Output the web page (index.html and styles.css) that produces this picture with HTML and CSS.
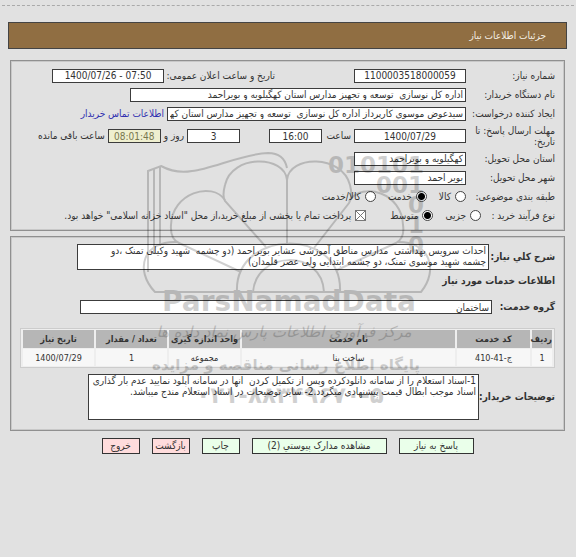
FILE: index.html
```html
<!DOCTYPE html>
<html lang="fa" dir="rtl">
<head>
<meta charset="utf-8">
<meta name="viewport" content="width=device-width, initial-scale=1">
<title>جزئیات اطلاعات نیاز</title>
<link rel="stylesheet" href="styles.css">
</head>
<body>
<header class="title-bar"><h1>جزئیات اطلاعات نیاز</h1></header>
<main>
<section class="panel panel-info">
  <div class="row">
    <label class="name" for="number">شماره نیاز:</label>
    <input class="field center medium" id="number" value="1100003518000059" readonly>
    <label class="announce" for="announce">تاریخ و ساعت اعلان عمومی:</label>
    <input class="field center medium" id="announce" dir="ltr" value="1400/07/26 - 07:50" readonly>
  </div>
  <div class="row">
    <label class="name" for="buyer">نام دستگاه خریدار:</label>
    <input class="field wide" id="buyer" value="اداره کل نوسازی  توسعه و تجهیز مدارس استان کهگیلویه و بویراحمد" readonly>
  </div>
  <div class="row">
    <label class="name" for="creator">ایجاد کننده درخواست:</label>
    <input class="field creator" id="creator" value="سیدعوض موسوی کارپرداز اداره کل نوسازی  توسعه و تجهیز مدارس استان کهگیلویه و بویراحمد" readonly>
    <a class="contact" href="#contact">اطلاعات تماس خریدار</a>
  </div>
  <div class="row">
    <label class="name" for="deadline">مهلت ارسال پاسخ: تا تاریخ:</label>
    <input class="field center medium" id="deadline" dir="ltr" value="1400/07/29" readonly>
    <label class="unit unit-hour" for="hour">ساعت</label>
    <input class="field center small" id="hour" value="16:00" readonly>
    <input class="field center small days" id="days" value="3" readonly>
    <label class="unit" for="days">روز و</label>
    <input class="field center small countdown" id="left" value="08:01:48" readonly>
    <label class="unit" for="left">ساعت باقی مانده</label>
  </div>
  <div class="row">
    <label class="name" for="province">استان محل تحویل:</label>
    <input class="field medium" id="province" value="کهگیلویه و بویراحمد" readonly>
  </div>
  <div class="row">
    <label class="name" for="city">شهر محل تحویل:</label>
    <input class="field medium" id="city" value="بویر احمد" readonly>
  </div>
  <div class="row" role="radiogroup" aria-labelledby="kind">
    <span class="name" id="kind">طبقه بندی موضوعی:</span>
    <div class="options">
      <label><input type="radio" name="kind">کالا</label>
      <label><input type="radio" name="kind" checked>خدمت</label>
      <label><input type="radio" name="kind">کالا/خدمت</label>
    </div>
  </div>
  <div class="row" role="radiogroup" aria-labelledby="process">
    <span class="name name-short" id="process">نوع فرآیند خرید :</span>
    <div class="options">
      <label><input type="radio" name="process">جزیی</label>
      <label><input type="radio" name="process" checked>متوسط</label>
    </div>
    <label class="treasury"><input type="checkbox" checked>پرداخت تمام یا بخشی از مبلغ خرید،از محل "اسناد خزانه اسلامی" خواهد بود.</label>
  </div>
</section>

<section class="panel panel-need">
  <div class="entry">
    <label for="summary">شرح کلي نیاز:</label>
    <textarea class="field summary" id="summary" readonly>احداث سرویس بهداشتی  مدارس مناطق آموزشی عشایر بویراحمد (دو چشمه  شهید وکیلی تمنک ،دو چشمه شهید موسوی تمنک، دو چشمه ابتدایی ولی عصر قلمدان)</textarea>
  </div>
  <h2>اطلاعات خدمات مورد نیاز</h2>
  <div class="entry group">
    <label for="group">گروه خدمت:</label>
    <input class="field" id="group" value="ساختمان" readonly>
  </div>
  <table>
    <colgroup><col class="c-index"><col class="c-code"><col class="c-service"><col class="c-std"><col class="c-std"><col class="c-std"></colgroup>
    <thead><tr><th>ردیف</th><th>کد خدمت</th><th>نام خدمت</th><th>واحد اندازه گیری</th><th>تعداد / مقدار</th><th>تاریخ نیاز</th></tr></thead>
    <tbody><tr><td>1</td><td>ج-41-410</td><td>ساخت بنا</td><td>مجموعه</td><td>1</td><td>1400/07/29</td></tr></tbody>
  </table>
  <div class="entry notes">
    <label for="notes">توضیحات خریدار:</label>
    <textarea class="field" id="notes" readonly>1-اسناد استعلام را از سامانه دانلودکرده وپس از تکمیل کردن  انها در سامانه آپلود نمایید عدم بار گذاری اسناد موجب ابطال قیمت پیشنهادی میگردد.2- سایر توضیحات در اسناد استعلام مندج میباشد.</textarea>
  </div>
</section>

<div class="actions">
  <button class="reply" type="button">پاسخ به نیاز</button>
  <button class="docs" type="button">مشاهده مدارک پیوستي (2)</button>
  <button type="button">چاپ</button>
  <button class="leave" type="button">بازگشت</button>
  <button class="leave" type="button">خروج</button>
</div>
</main>

<svg class="watermark" viewBox="140 145 300 270" width="300" height="270" aria-hidden="true">
  <g class="mark-lines">
    <path d="M148 272V171L161 166Q176 174 192 171C212 169 242 154 268 153Q284 153 287 168"/>
    <path d="M154 169V253M160 166V246"/>
    <path d="M287 245V180C285 155 232 154 225 185Q222 196 225 201L266 247"/>
    <path d="M287 180C289 155 342 154 350 185Q353 196 349 203L314 248"/>
    <path d="M225 200C212 181 172 193 171 225Q170 239 179 243L241 272"/>
    <path d="M349 201C363 181 402 193 403 225Q405 238 396 243L337 270"/>
    <path d="M178 242C143 240 134 270 155 292H421C439 270 430 241 397 242"/>
    <path d="M237 292C234 229 343 226 340 292M253 292C256 251 322 248 324 292"/>
  </g>
  <g class="mark-text" direction="ltr">
    <text class="mark-digits" x="424" y="173">010101</text>
    <text class="mark-digits" x="424" y="193">001</text>
    <text class="mark-digits" x="424" y="213">0</text>
    <text class="mark-digits" x="424" y="233">1</text>
    <text class="mark-digits" x="424" y="253">0</text>
    <text class="mark-brand" x="289" y="311">ParsNamadData</text>
  </g>
  <g class="mark-text" direction="rtl">
    <text class="mark-script" x="284" y="337">مرکز فرآوری اطلاعات پارس نماد داده ها</text>
    <text class="mark-site" x="286" y="370">پایگاه اطلاع رسانی مناقصه و مزایده</text>
    <text class="mark-phone" direction="ltr" x="290" y="403">۰۲۱-۸۸۳۴۹۶۷۰-۵</text>
  </g>
</svg>
</body>
</html>
```

FILE: styles.css
```css
* { box-sizing: border-box; }

body {
  position: relative;
  margin: 0;
  padding: 5px 2px 0;
  background: #e1e1e1;
  color: #333;
  font: 10px/12px "DejaVu Sans Condensed", "DejaVu Sans", sans-serif;
}

input, textarea, button { font: inherit; color: inherit; }

.title-bar {
  padding: 16px 7px 0 6px;
  border-top: 1px dashed #aaa;
}

h1 {
  margin: 0;
  padding: 0 20px;
  border: 1px solid #444;
  background: #906e42;
  color: #f4eee4;
  font-size: 10px;
  font-weight: normal;
  line-height: 25px;
}

main { padding: 11px 9px 0 8px; }

.panel {
  border: 1px solid #909090;
  box-shadow: inset 0 0 0 1px #c8c8c8;
  padding: 7px 9px;
}

.panel-info {
  display: flex;
  flex-direction: column;
  gap: 4px;
}

.row {
  display: flex;
  align-items: center;
  min-height: 15px;
  white-space: nowrap;
}

.name {
  flex: 0 0 89px;
  line-height: 11px;
  white-space: normal;
}

.name-short { flex-basis: 74px; }

.field {
  height: 14px;
  margin: 0;
  padding: 0 2px;
  border: 1px solid #3c3c3c;
  border-radius: 0;
  background: #fff;
  outline: 0;
}

.center { text-align: center; }
.medium { width: 112px; }
.wide { width: 336px; }
.creator { width: 299px; }
.small { width: 53px; }

.announce { flex: 0 0 111px; margin-right: 79px; }
.contact { margin-right: 3px; color: #3030b0; text-decoration: none; }
.unit { margin: 0 3px; }
.unit-hour { flex-basis: 26px; }
.days { margin-right: 29px; }
.countdown { background: #efefcf; color: #77774f; }

.options { display: flex; gap: 12px; }
.options label, .treasury { display: flex; align-items: center; gap: 4px; }
.treasury { margin-right: 24px; }

input[type="radio"], input[type="checkbox"] {
  appearance: none;
  width: 11px;
  height: 11px;
  margin: 0;
  border: 1px solid #444;
  background: #fff;
}

input[type="radio"] { border-radius: 50%; }
input[type="radio"]:checked { background: radial-gradient(circle, #000 3px, #fff 4px); }

input[type="checkbox"] {
  border-color: #777;
  background:
    linear-gradient(45deg, transparent 46%, #777 47% 53%, transparent 54%),
    linear-gradient(135deg, transparent 46%, #777 47% 53%, transparent 54%),
    #fff;
}

.panel-need { margin-top: 5px; padding-bottom: 10px; }

.entry {
  display: flex;
  align-items: center;
}

.entry label {
  flex: 0 0 66px;
  font-weight: bold;
  white-space: nowrap;
}

.entry .field { width: 77%; }

textarea.field {
  display: block;
  height: 26px;
  resize: none;
  overflow: hidden;
  line-height: 11px;
}

.summary { padding-left: 16px; }

h2 {
  margin: 5px 0 13px;
  font-size: 10px;
  line-height: 12px;
}

.entry.group label { flex-basis: 63px; }
.entry.notes label { flex-basis: 76px; }
.entry.notes .field { width: 73%; height: 46px; }

table {
  width: 100%;
  margin: 14px 0 6px;
  border: 1px solid #ccc;
  border-spacing: 2px 1px;
  table-layout: fixed;
  background: #eee;
  text-align: center;
}

th, td { padding: 0; font-size: 9px; white-space: nowrap; }
th { height: 18px; background: #b6b6b6; }
td { height: 17px; background: #f7f7f7; }

.c-index { width: 20px; }
.c-code { width: 73px; }
.c-service { width: 213px; }

.actions {
  display: flex;
  justify-content: center;
  gap: 12px;
  margin-top: 7px;
}

button {
  width: 38px;
  height: 16px;
  padding: 0;
  border: 1px solid #333;
  background: #eaffea;
  line-height: 12px;
  white-space: nowrap;
}

.reply { width: 75px; }
.docs { width: 135px; }
.leave { background: #ffdcdc; }

.watermark {
  position: absolute;
  top: 145px;
  left: 50%;
  margin-left: -148px;
  opacity: 0.18;
  pointer-events: none;
}

.mark-lines { fill: none; stroke: #000; stroke-width: 2; }
.mark-text { fill: #000; text-anchor: middle; }
.mark-digits { font: bold 23px "DejaVu Sans", sans-serif; text-anchor: end; }
.mark-brand { font: bold 28px "DejaVu Sans", sans-serif; }
.mark-script { font: italic 15px "DejaVu Sans", sans-serif; }
.mark-site { font: bold 15px "DejaVu Sans", sans-serif; }
.mark-phone { font: bold 23px "DejaVu Sans", sans-serif; }
```
